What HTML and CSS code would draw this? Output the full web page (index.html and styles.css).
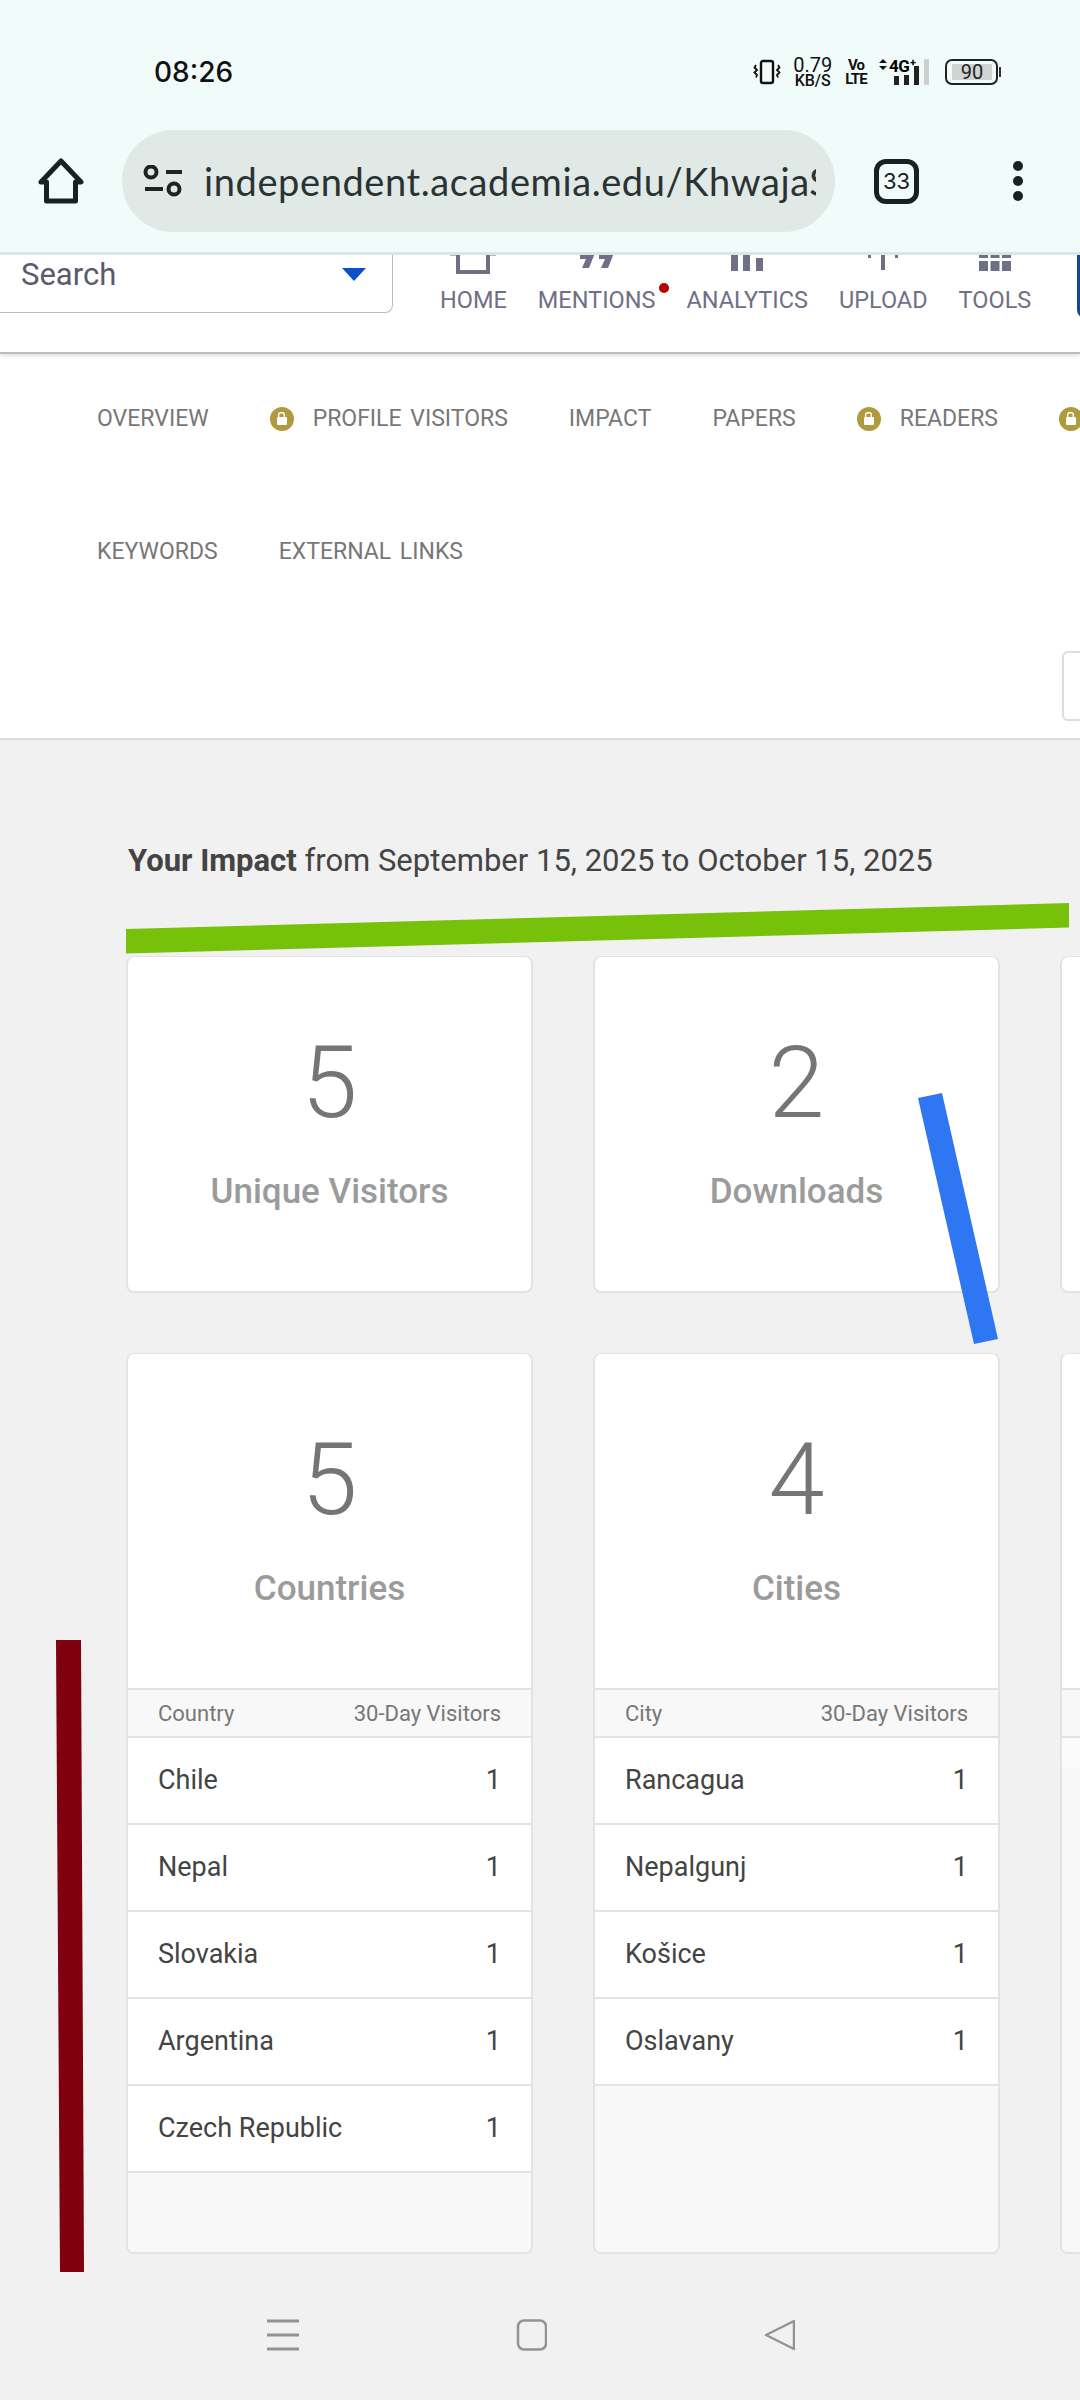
FILE: index.html
```html
<!DOCTYPE html>
<html lang="en">

<head>
    <meta charset="UTF-8">
    <meta name="viewport" content="width=device-width, initial-scale=1.0">
    <title>Academia Impact</title>
    <link rel="stylesheet" href="styles.css">
</head>

<body>
    <!-- phone status bar and browser toolbar -->
    <div class="chromeNode">
        <div class="statusBar">
            <div class="clock">08:26</div>
            <div class="statusIcons">
                <svg class="vibrate" width="28" height="26" viewBox="0 0 28 26" fill="none" stroke="#111">
                    <rect x="8" y="2" width="12" height="22" rx="2" stroke-width="2.400" />
                    <path d="M3 6l-1.500 2.500 2.500 2.500-2.500 2.500 2.500 2.500-1 2.500M25 6l1.500 2.500-2.500 2.500 2.500 2.500-2.500 2.500 1 2.500" stroke-width="1.800" />
                </svg>
                <div class="speed"><span class="speedNum">0.79</span><span class="speedUnit">KB/S</span></div>
                <div class="volte"><span>Vo</span><span>LTE</span></div>
                <svg class="signal" width="52" height="28" viewBox="0 0 52 28">
                    <path d="M0 5l4-4 4 4zM0 8l4 4 4-4z" fill="#111" />
                    <text x="10" y="14" class="signalText">4G</text>
                    <text x="31" y="8" class="signalPlus">+</text>
                    <rect x="15" y="18" width="5" height="9" fill="#222" />
                    <rect x="25" y="17" width="5" height="10" fill="#222" />
                    <rect x="35" y="8" width="5" height="19" fill="#222" />
                    <rect x="45" y="1" width="5" height="26" fill="#ccd0cf" />
                </svg>
                <div class="battery">
                    <div class="batteryFill">90</div>
                </div>
                <div class="batteryTip"></div>
            </div>
        </div>
        <div class="toolBar">
            <svg class="homeBtn" width="46" height="46" viewBox="0 0 46 46" fill="none" stroke="#182020" stroke-width="5" stroke-linejoin="round" stroke-linecap="round">
                <path d="M3 24L23 3l20 21h-5.500v19h-29V24z" />
            </svg>
            <div class="urlPill">
                <svg class="tuneIcon" width="40" height="32" viewBox="0 0 40 32" fill="none" stroke="#1c2424" stroke-width="4">
                    <circle cx="8" cy="7" r="5.500" />
                    <path d="M23 7h16M2 24h18" />
                    <circle cx="31" cy="24" r="5.500" />
                </svg>
                <div class="urlText">independent.academia.edu/KhwajaS</div>
            </div>
            <div class="tabCount">33</div>
            <div class="moreBtn"><i></i><i></i><i></i></div>
        </div>
    </div>

    <!-- site header, the icons are cut off by the browser toolbar -->
    <div class="siteHeader">
        <div class="searchBox">
            <span class="searchText">Search</span>
            <span class="searchArrow"></span>
        </div>
        <div class="siteNav">
            <div class="navItem">
                <svg width="46" height="21" viewBox="0 0 46 21" fill="none" stroke="#6f6f85" stroke-width="4">
                    <path d="M8 0v19h30V0" />
                    <path d="M0 1h6M40 1h6" stroke-width="3" />
                </svg>
                <span>HOME</span>
            </div>
            <div class="navItem dotted">
                <svg width="36" height="21" viewBox="0 0 36 21" fill="#6f6f85">
                    <path d="M1 0h15l-6 15H3l4-9H1zM20 0h15l-6 15h-7l4-9h-6z" />
                </svg>
                <span>MENTIONS</span>
            </div>
            <div class="navItem">
                <svg width="32" height="21" viewBox="0 0 32 21" fill="#6f6f85">
                    <rect x="0" y="0" width="7" height="18" />
                    <rect x="12" y="0" width="7" height="18" />
                    <rect x="25" y="5" width="7" height="13" />
                </svg>
                <span>ANALYTICS</span>
            </div>
            <div class="navItem">
                <svg width="30" height="21" viewBox="0 0 30 21" fill="#6f6f85">
                    <rect x="13" y="0" width="4" height="17" />
                    <rect x="0" y="2" width="3" height="3" />
                    <rect x="27" y="2" width="3" height="3" />
                </svg>
                <span>UPLOAD</span>
            </div>
            <div class="navItem">
                <svg width="32" height="21" viewBox="0 0 32 21" fill="#6f6f85">
                    <rect x="0" y="0" width="9" height="5" />
                    <rect x="11.500" y="0" width="9" height="5" />
                    <rect x="23" y="0" width="9" height="5" />
                    <rect x="0" y="8" width="9" height="10" />
                    <rect x="11.500" y="8" width="9" height="10" />
                    <rect x="23" y="8" width="9" height="10" />
                </svg>
                <span>TOOLS</span>
            </div>
        </div>
        <div class="headerBtn"></div>
    </div>

    <!-- tabs -->
    <div class="tabsNode">
        <div class="tabRow">
            <a class="tab">OVERVIEW</a>
            <a class="tab"><span class="lock"></span>PROFILE VISITORS</a>
            <a class="tab">IMPACT</a>
            <a class="tab">PAPERS</a>
            <a class="tab"><span class="lock"></span>READERS</a>
            <a class="tab"><span class="lock"></span></a>
        </div>
        <div class="tabRow">
            <a class="tab">KEYWORDS</a>
            <a class="tab">EXTERNAL LINKS</a>
        </div>
        <div class="tabTools">
            <div class="toolBtn"></div>
        </div>
    </div>

    <!-- impact cards -->
    <div class="mainNode">
        <h1 class="impactTitle"><b>Your Impact</b> from September 15, 2025 to October 15, 2025</h1>
        <div class="cardGrid">
            <div class="card">
                <div class="stat">
                    <div class="statNum">5</div>
                    <div class="statLabel">Unique Visitors</div>
                </div>
            </div>
            <div class="card">
                <div class="stat">
                    <div class="statNum">2</div>
                    <div class="statLabel">Downloads</div>
                </div>
            </div>
            <div class="card">
                <div class="stat"></div>
            </div>

            <div class="card">
                <div class="stat">
                    <div class="statNum">5</div>
                    <div class="statLabel">Countries</div>
                </div>
                <div class="tableHead"><span>Country</span><span>30-Day Visitors</span></div>
                <div class="tableRow"><span>Chile</span><span>1</span></div>
                <div class="tableRow"><span>Nepal</span><span>1</span></div>
                <div class="tableRow"><span>Slovakia</span><span>1</span></div>
                <div class="tableRow"><span>Argentina</span><span>1</span></div>
                <div class="tableRow"><span>Czech Republic</span><span>1</span></div>
                <div class="tableFoot"></div>
            </div>
            <div class="card">
                <div class="stat">
                    <div class="statNum">4</div>
                    <div class="statLabel">Cities</div>
                </div>
                <div class="tableHead"><span>City</span><span>30-Day Visitors</span></div>
                <div class="tableRow"><span>Rancagua</span><span>1</span></div>
                <div class="tableRow"><span>Nepalgunj</span><span>1</span></div>
                <div class="tableRow"><span>Košice</span><span>1</span></div>
                <div class="tableRow"><span>Oslavany</span><span>1</span></div>
                <div class="tableFoot"></div>
            </div>
            <div class="card">
                <div class="stat"></div>
                <div class="tableHead"></div>
                <div class="tableBlank"></div>
                <div class="tableFoot"></div>
            </div>
        </div>
    </div>

    <!-- phone navigation bar -->
    <div class="phoneNav">
        <svg width="32" height="32" viewBox="0 0 32 32" fill="none" stroke="#939393" stroke-width="3">
            <path d="M0 2h32M0 16h32M0 30h32" />
        </svg>
        <svg width="32" height="32" viewBox="0 0 32 32" fill="none" stroke="#939393" stroke-width="2.500">
            <rect x="3" y="1.500" width="28" height="29" rx="6" />
        </svg>
        <svg width="32" height="32" viewBox="0 0 32 32" fill="none" stroke="#939393" stroke-width="2.500" stroke-linejoin="round">
            <path d="M31 2L3 16l28 14z" />
        </svg>
    </div>

    <!-- marker strokes drawn on top of the screenshot -->
    <svg class="marks" width="1080" height="2400" viewBox="0 0 1080 2400">
        <polygon points="126,929 1069,903 1069,927.500 126,953.500" fill="#78c10a" />
        <polygon points="918,1098 942,1093 998,1339 974,1344" fill="#2f76f2" />
        <polygon points="56,1640 81,1640 84,2272 60,2272" fill="#80000f" />
    </svg>
</body>

</html>
```
FILE: styles.css
```css
* {
    margin: 0;
    padding: 0;
    box-sizing: border-box;
}

body {
    width: 1080px;
    height: 2400px;
    position: relative;
    overflow: hidden;
    display: flex;
    flex-direction: column;
    background: #f1f1f1;
    font-family: Roboto, "Liberation Sans", sans-serif;
}

/* status bar + toolbar */
.chromeNode {
    height: 255px;
    flex: none;
    background: #f1fbf9;
    border-bottom: 3px solid #dbe5e3;
    position: relative;
    z-index: 2;
}

.statusBar {
    height: 130px;
    padding: 0 79px 0 154px;
    display: flex;
    align-items: center;
    justify-content: space-between;
    padding-top: 14px;
}

.clock {
    font-family: Inter, sans-serif;
    font-size: 28px;
    font-weight: 500;
    color: #111;
}

.statusIcons {
    display: flex;
    align-items: center;
    color: #111;
}

.vibrate {
    margin-right: 12px;
}

.speed,
.volte {
    display: flex;
    flex-direction: column;
    align-items: center;
    line-height: 1;
}

.speedNum {
    font-size: 20px;
    line-height: 17px;
}

.speedUnit {
    font-size: 16px;
    font-weight: 500;
    line-height: 13px;
}

.volte {
    margin: 0 12px 0 13px;
    font-size: 15px;
    font-weight: 700;
    line-height: 14px;
    letter-spacing: -0.8px;
}

.signalText {
    font-family: Roboto, sans-serif;
    font-size: 17px;
    font-weight: 700;
    letter-spacing: -0.5px;
}

.signalPlus {
    font-family: Roboto, sans-serif;
    font-size: 11px;
    font-weight: 700;
}

.battery {
    width: 53px;
    height: 26px;
    margin-left: 14px;
    padding: 3px;
    border: 2px solid #222;
    border-radius: 7px;
}

.batteryFill {
    width: 40px;
    height: 16px;
    margin-left: 2px;
    background: #cfd3d2;
    font-size: 20px;
    line-height: 16px;
    text-align: center;
    color: #222;
}

.batteryTip {
    width: 2px;
    height: 10px;
    background: #333;
    margin-left: 1px;
}

.toolBar {
    height: 102px;
    padding-left: 38px;
    display: flex;
    align-items: center;
}

.urlPill {
    width: 713px;
    height: 102px;
    margin-left: 38px;
    padding: 0 19px 0 21px;
    display: flex;
    align-items: center;
    background: #e1e9e7;
    border-radius: 51px;
}

.tuneIcon {
    flex: none;
    margin-right: 21px;
}

.urlText {
    overflow: hidden;
    white-space: nowrap;
    font-family: Lato, sans-serif;
    font-size: 38px;
    letter-spacing: 0.6px;
    color: #2a3232;
}

.tabCount {
    width: 45px;
    height: 45px;
    margin-left: 39px;
    border: 5px solid #182020;
    border-radius: 12px;
    font-family: Inter, sans-serif;
    font-size: 22px;
    line-height: 35px;
    text-align: center;
    color: #182020;
}

.moreBtn {
    margin-left: 94px;
    display: flex;
    flex-direction: column;
    gap: 5px;
}

.moreBtn i {
    width: 10px;
    height: 10px;
    background: #182020;
    border-radius: 50%;
}

/* site header */
.siteHeader {
    height: 101px;
    flex: none;
    margin-top: -2px;
    display: flex;
    align-items: flex-start;
    background: #fff;
    border-bottom: 2px solid #bcbcbc;
    box-shadow: 0 2px 4px rgba(0, 0, 0, 0.12);
    position: relative;
    z-index: 1;
}

.searchBox {
    width: 404px;
    height: 60px;
    margin-left: -11px;
    padding-left: 31px;
    flex: none;
    display: flex;
    align-items: flex-start;
    justify-content: space-between;
    background: #fff;
    border: 1px solid #bbb;
    border-top: 0;
    border-radius: 0 0 8px 8px;
}

.searchText {
    font-size: 31px;
    line-height: 36px;
    margin-top: 4px;
    color: #5a5a6a;
}

.searchArrow {
    width: 0;
    height: 0;
    margin: 15px 26px 0 0;
    border-left: 12px solid transparent;
    border-right: 12px solid transparent;
    border-top: 13px solid #0a50c8;
}

.siteNav {
    margin-left: 47px;
    display: flex;
    gap: 31px;
}

.navItem {
    display: flex;
    flex-direction: column;
    align-items: center;
    position: relative;
    font-size: 23.500px;
    line-height: 28px;
    color: #6f6f85;
}

.navItem svg {
    display: block;
    height: 21px;
    margin-bottom: 12px;
}

.navItem.dotted::after {
    content: "";
    width: 10px;
    height: 10px;
    position: absolute;
    right: -14px;
    top: 30px;
    background: #b80000;
    border-radius: 50%;
}

.headerBtn {
    width: 20px;
    height: 65px;
    margin-left: auto;
    margin-right: -17px;
    background: #14459f;
    border-radius: 0 0 0 8px;
}

/* tabs */
.tabsNode {
    height: 386px;
    flex: none;
    padding: 51px 0 0 97px;
    background: #fff;
    border-bottom: 2px solid #ddd;
}

.tabRow {
    height: 28px;
    margin-bottom: 105px;
    display: flex;
    gap: 61px;
    white-space: nowrap;
}

.tab {
    display: flex;
    align-items: center;
    font-size: 23px;
    line-height: 28px;
    word-spacing: 3px;
    color: #777;
}

.lock {
    width: 24px;
    height: 24px;
    margin-right: 19px;
    flex: none;
    position: relative;
    background: #b09a3e;
    border-radius: 50%;
}

.lock::before {
    content: "";
    width: 10px;
    height: 8px;
    position: absolute;
    left: 7px;
    top: 10px;
    background: #fff;
    border-radius: 1px;
}

.lock::after {
    content: "";
    width: 6px;
    height: 7px;
    position: absolute;
    left: 7px;
    top: 5px;
    border: 2px solid #fff;
    border-bottom: 0;
    border-radius: 4px 4px 0 0;
    box-sizing: content-box;
    transform: scale(0.7);
    transform-origin: top left;
    margin-left: 1px;
}

.tabTools {
    display: flex;
    justify-content: flex-end;
    margin-top: -20px;
}

.toolBtn {
    width: 40px;
    height: 70px;
    margin-right: -22px;
    border: 2px solid #ddd;
    border-radius: 6px;
}

/* cards */
.mainNode {
    flex: 1;
    padding: 103px 0 0 126px;
}

.impactTitle {
    height: 36px;
    padding-left: 2px;
    font-size: 31px;
    font-weight: 400;
    line-height: 36px;
    color: #444;
}

.impactTitle b {
    font-weight: 700;
}

.cardGrid {
    margin-top: 77px;
    display: grid;
    grid-template-columns: repeat(3, 407px);
    grid-template-rows: 337px 901px;
    column-gap: 60px;
    row-gap: 60px;
}

.card {
    display: flex;
    flex-direction: column;
    overflow: hidden;
    background: #fff;
    border: 2px solid #e3e3e3;
    border-top-width: 1px;
    border-radius: 8px;
}

.stat {
    height: 334px;
    flex: none;
    padding-top: 76px;
    text-align: center;
}

.statNum {
    font-size: 101px;
    font-weight: 300;
    line-height: 100px;
    color: #757575;
}

.statLabel {
    margin-top: 39px;
    font-size: 35px;
    font-weight: 500;
    line-height: 40px;
    color: #9b9b9b;
}

.tableHead,
.tableRow {
    display: flex;
    align-items: center;
    justify-content: space-between;
    padding: 0 30px;
    border-top: 2px solid #e3e3e3;
}

.tableHead {
    height: 48px;
    background: #f8f8f8;
    font-size: 22px;
    color: #777;
}

.tableRow {
    height: 87px;
    padding-bottom: 1px;
    font-size: 27px;
    color: #444;
}

.tableBlank {
    height: 31px;
    flex: none;
    background: #fbfbfb;
    border-top: 2px solid #e3e3e3;
}

.tableFoot {
    flex: 1;
    background: #f8f8f8;
    border-top: 2px solid #e3e3e3;
}

.tableBlank+.tableFoot {
    border-top: 0;
}

/* bottom nav */
.phoneNav {
    height: 130px;
    flex: none;
    padding: 0 0 0 267px;
    display: flex;
    align-items: center;
    gap: 216px;
}

/* hand drawn marks */
.marks {
    position: absolute;
    left: 0;
    top: 0;
    z-index: 3;
    pointer-events: none;
}
```
